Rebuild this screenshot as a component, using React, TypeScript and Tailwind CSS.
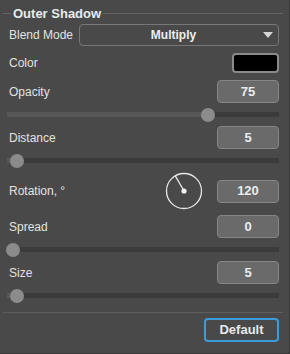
import type { ReactNode } from "react";

const font = { fontFamily: '"Liberation Sans", Arial, sans-serif' };

function Label({ children }: { children: ReactNode }) {
  return <span className="pl-[2px] text-[12px] text-[#e2e2e2]">{children}</span>;
}

function ValueBox({ value }: { value: string }) {
  return (
    <div className="flex h-[23px] w-[62px] items-center justify-center rounded-[4px] border border-[#858585] bg-[#6a6a6a] text-[13px] font-bold text-[#ececec]">
      {value}
    </div>
  );
}

function Slider({ frac }: { frac: number }) {
  const center = 6 + frac * 260;
  return (
    <div className="relative flex h-[23px] items-center">
      <div className="flex h-[5px] w-full">
        <div className="h-full bg-[#585858]" style={{ width: center }} />
        <div className="h-full flex-1 bg-[#3b3b3b]" />
      </div>
      <div
        className="absolute top-[4.5px] h-[14px] w-[14px] rounded-full bg-[#8b8b8b]"
        style={{ left: center - 7 }}
      />
    </div>
  );
}

function Dial() {
  return (
    <svg width="38" height="38" viewBox="0 0 38 38">
      <circle cx="19" cy="19" r="17.5" fill="none" stroke="#e6e6e6" strokeWidth="1.3" />
      <line x1="19" y1="19" x2="10.3" y2="3.9" stroke="#e6e6e6" strokeWidth="1.3" />
      <circle cx="19" cy="19" r="2.6" fill="#f2f2f2" />
    </svg>
  );
}

export default function App() {
  return (
    <div
      className="flex h-[354px] w-[290px] flex-col border-r border-b border-[#3a3a3a] bg-[#494949] pt-[5px] pr-[6px] pl-[3px]"
      style={font}
    >
      <div className="flex h-[17px] items-center">
        <div className="h-px w-[8px] bg-[#636363]" />
        <span className="px-[2px] text-[13px] font-bold text-[#e6ebef]">Outer Shadow</span>
        <div className="h-px flex-1 bg-[#636363]" />
      </div>

      <div className="flex flex-col px-[4px]">
        <div className="mt-[2px] flex h-[22px] items-center justify-between">
          <Label>Blend Mode</Label>
          <div className="flex h-[22px] w-[200px] items-center rounded-[4px] border border-[#777777] pr-[5px]">
            <span className="flex-1 pl-[4px] text-center text-[12px] font-bold text-[#eeeeee]">Multiply</span>
            <svg width="10" height="6" viewBox="0 0 10 6">
              <path d="M0 0H10L5 6Z" fill="#d6d6d6" />
            </svg>
          </div>
        </div>

        <div className="mt-[7px] flex h-[20px] items-center justify-between">
          <Label>Color</Label>
          <div className="h-[20px] w-[47px] rounded-[4px] border-2 border-[#8a8a8a] bg-black" />
        </div>

        <div className="mt-[7px] flex h-[23px] items-center justify-between">
          <Label>Opacity</Label>
          <ValueBox value="75" />
        </div>
        <Slider frac={0.75} />

        <div className="flex h-[23px] items-center justify-between">
          <Label>Distance</Label>
          <ValueBox value="5" />
        </div>
        <Slider frac={0.015} />

        <div className="mt-[1px] flex h-[36px] items-center">
          <Label>Rotation, °</Label>
          <div className="ml-auto mr-[14px]">
            <Dial />
          </div>
          <ValueBox value="120" />
        </div>

        <div className="mt-[6px] flex h-[23px] items-center justify-between">
          <Label>Spread</Label>
          <ValueBox value="0" />
        </div>
        <Slider frac={0} />

        <div className="flex h-[23px] items-center justify-between">
          <Label>Size</Label>
          <ValueBox value="5" />
        </div>
        <Slider frac={0.015} />
      </div>

      <div className="mt-[5px] h-px bg-[#5e5e5e]" />

      <div className="mt-[5px] flex justify-end px-[4px]">
        <button
          type="button"
          className="h-[24px] w-[75px] rounded-[4px] border-2 border-[#3b9bdb] text-[13px] font-bold text-[#e8e8e8]"
        >
          Default
        </button>
      </div>
    </div>
  );
}
